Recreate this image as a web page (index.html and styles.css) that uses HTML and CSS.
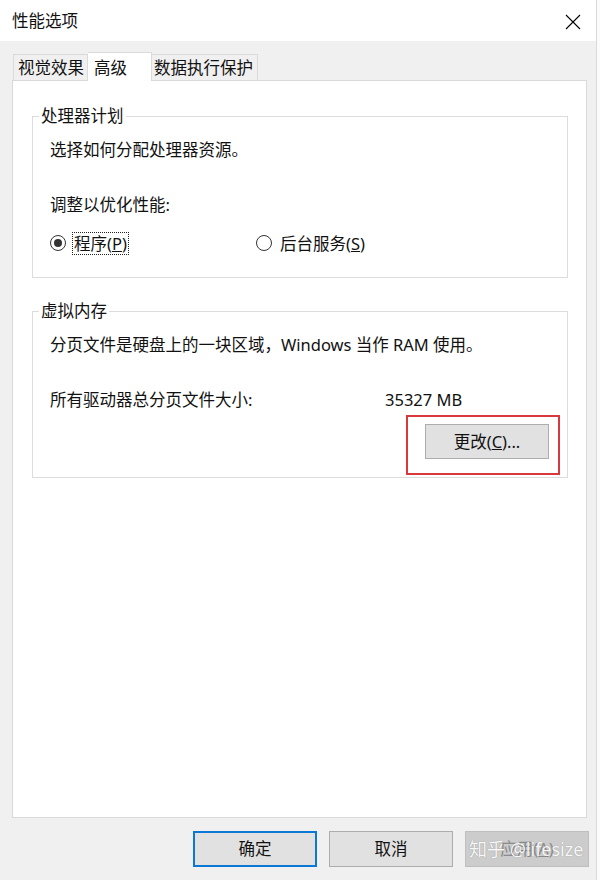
FILE: index.html
```html
<!DOCTYPE html>
<html lang="zh-CN">
<head>
<meta charset="utf-8">
<title>性能选项</title>
<link rel="stylesheet" href="styles.css">
</head>
<body>
<div class="window">
  <div class="titlebar">
    <span class="title">性能选项</span>
    <svg class="close" width="16" height="16" viewBox="0 0 16 16" aria-hidden="true">
      <path d="M1 1 L15 15 M15 1 L1 15" stroke="#000" stroke-width="1.1" fill="none"/>
    </svg>
  </div>
  <div class="tabs">
    <div class="tab tab-visual">视觉效果</div>
    <div class="tab tab-active">高级</div>
    <div class="tab tab-dep">数据执行保护</div>
  </div>
  <div class="panel">
    <fieldset class="group">
      <legend>处理器计划</legend>
      <div class="group-body">
        <div class="line">选择如何分配处理器资源。</div>
        <div class="line gap">调整以优化性能:</div>
        <div class="radios">
          <label class="radio-item first">
            <span class="radio checked"></span>
            <span class="focus">程序(<u>P</u>)</span>
          </label>
          <label class="radio-item">
            <span class="radio"></span>
            <span class="plain">后台服务(<u>S</u>)</span>
          </label>
        </div>
      </div>
    </fieldset>
    <fieldset class="group group-vm">
      <legend>虚拟内存</legend>
      <div class="group-body">
        <div class="line">分页文件是硬盘上的一块区域，Windows 当作 RAM 使用。</div>
        <div class="line gap size-row">
          <span>所有驱动器总分页文件大小:</span>
          <span>35327 MB</span>
        </div>
        <div class="change-row">
          <div class="highlight">
            <button class="btn btn-change">更改(<u>C</u>)...</button>
          </div>
        </div>
      </div>
    </fieldset>
  </div>
  <div class="footer">
    <button class="btn btn-foot btn-default">确定</button>
    <button class="btn btn-foot">取消</button>
    <div class="apply-wrap">
      <button class="btn btn-foot btn-disabled">应用(<u>A</u>)</button>
      <span class="watermark">知乎 @lifesize</span>
    </div>
  </div>
</div>
</body>
</html>
```
FILE: styles.css
```css
* { box-sizing: border-box; }
html, body { margin: 0; padding: 0; background: #fbfbfb; }
body {
  font-family: "Noto Sans", "Noto Sans CJK SC", sans-serif;
  font-size: 16.5px;
  color: #111;
}
.window {
  width: 597px;
  height: 880px;
  background: #f0f0f0;
  border-right: 1px solid #dadada;
  display: flex;
  flex-direction: column;
}
.titlebar {
  height: 41px;
  flex: none;
  background: #fff;
  display: flex;
  align-items: center;
  justify-content: space-between;
  padding: 1px 12px 0 12px;
}
.title { line-height: 20px; }
.close { margin-right: 3px; margin-top: 1px; }
.tabs {
  flex: none;
  height: 28px;
  margin-top: 11px;
  padding-left: 13px;
  display: flex;
  align-items: flex-end;
}
.tab {
  height: 26px;
  border: 1px solid #dadada;
  border-bottom: none;
  background: #f0f0f0;
  line-height: 24px;
  padding-top: 1px;
  white-space: nowrap;
}
.tab-visual { width: 75px; padding-left: 4px; }
.tab-dep { width: 106px; padding-left: 2px; border-left: none; }
.tab-active {
  height: 29px;
  width: 64px;
  margin-bottom: -1px;
  position: relative;
  z-index: 1;
  background: #fff;
  padding-left: 6px;
  padding-top: 3px;
  border-left: none;
}
.panel {
  flex: 1;
  margin-left: 12px;
  width: 575px;
  background: #fff;
  border: 1px solid #d9d9d9;
  padding: 25px 18px 0 19px;
}
.group {
  margin: 0;
  min-width: 0;
  border: 1px solid #dcdcdc;
  padding: 0 7px 22px 6px;
}
.group legend {
  padding: 0 2px;
  line-height: 20px;
}
.group-vm { margin-top: 23px; padding-bottom: 2px; }
.group-body { padding-left: 11px; padding-top: 14px; }
.line { line-height: 20px; white-space: nowrap; }
.gap { margin-top: 35px; }
.radios {
  margin-top: 16px;
  height: 24px;
  display: flex;
  align-items: center;
}
.radio-item { display: flex; align-items: center; }
.radio-item.first { width: 206px; }
.radio {
  width: 16px;
  height: 16px;
  border: 1px solid #333;
  border-radius: 50%;
  display: flex;
  align-items: center;
  justify-content: center;
  margin-right: 6px;
  background: #fff;
}
.radio.checked::after {
  content: "";
  width: 8px;
  height: 8px;
  border-radius: 50%;
  background: #333;
}
.focus {
  border: 1px dotted #222;
  padding: 0 1px;
  line-height: 21px;
}
.plain { padding: 0 2px; line-height: 21px; }
.size-row {
  display: grid;
  grid-template-columns: 335px auto;
}
.change-row {
  margin-top: 5px;
  display: flex;
  justify-content: flex-end;
}
.highlight {
  border: 2px solid #d9383d;
  padding: 7px 9px 14px 17px;
}
.btn {
  font-family: "Noto Sans", "Noto Sans CJK SC", sans-serif;
  font-size: 16.5px;
  color: #111;
  width: 124px;
  height: 35px;
  background: #e1e1e1;
  border: 1px solid #adadad;
  padding: 0;
  line-height: 20px;
}
.footer {
  flex: none;
  display: flex;
  justify-content: flex-end;
  gap: 12px;
  padding: 13px 7px 13px 0;
}
.btn-foot { height: 36px; }
.btn-default { border: 2px solid #0a78d4; }
.btn-disabled {
  background: #cccccc;
  border-color: #bfbfbf;
  color: #8b8b8b;
}
.apply-wrap { position: relative; }
.watermark {
  position: absolute;
  left: 4px;
  top: 6px;
  font-size: 18px;
  line-height: 24px;
  color: rgba(255, 255, 255, 0.95);
  text-shadow: 0 0 1px rgba(0, 0, 0, 0.35);
  white-space: nowrap;
}
```
